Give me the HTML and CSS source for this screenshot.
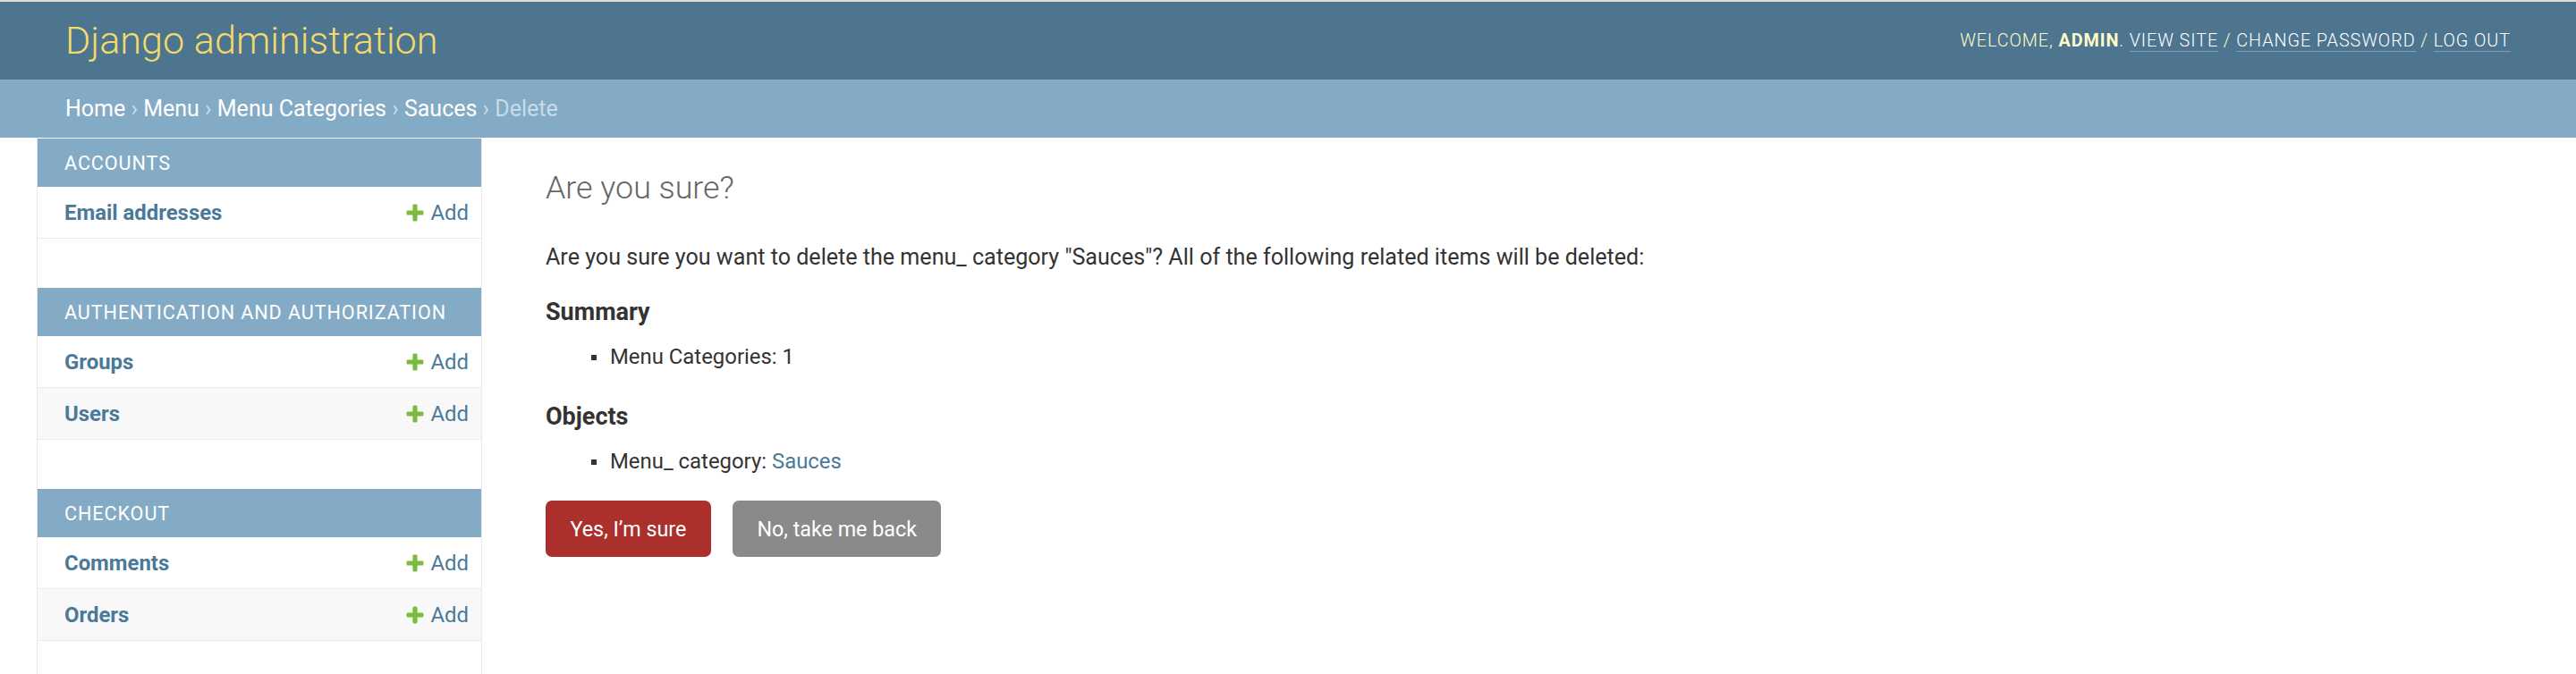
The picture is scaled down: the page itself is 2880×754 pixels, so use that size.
FILE: index.html
```html
<!DOCTYPE html>
<html lang="en">
<head>
<meta charset="utf-8">
<title>Are you sure? | Django site admin</title>
<link rel="stylesheet" href="styles.css">
</head>
<body>
<div class="container">
  <header class="header">
    <div class="branding">
      <h1 class="site-name"><a href="#">Django administration</a></h1>
    </div>
    <div class="user-tools">
      Welcome, <strong>admin</strong>.
      <a href="#">View site</a> /
      <a href="#">Change password</a> /
      <a href="#">Log out</a>
    </div>
  </header>

  <nav class="breadcrumbs">
    <a href="#">Home</a> <span class="sep">›</span>
    <a href="#">Menu</a> <span class="sep">›</span>
    <a href="#">Menu Categories</a> <span class="sep">›</span>
    <a href="#">Sauces</a> <span class="sep">›</span>
    <span class="current">Delete</span>
  </nav>

  <div class="main">
    <button class="toggle-nav" aria-label="Toggle navigation"></button>

    <nav class="sidebar">
      <div class="module">
        <div class="caption">Accounts</div>
        <div class="model-row">
          <a class="model-name" href="#">Email addresses</a>
          <a class="addlink" href="#"><svg class="plus" viewBox="0 0 1792 1792"><path d="M1600 796v192q0 40-28 68t-68 28h-416v416q0 40-28 68t-68 28h-192q-40 0-68-28t-28-68v-416h-416q-40 0-68-28t-28-68v-192q0-40 28-68t68-28h416v-416q0-40 28-68t68-28h192q40 0 68 28t28 68v416h416q40 0 68 28t28 68z"/></svg>Add</a>
        </div>
      </div>

      <div class="module">
        <div class="caption">Authentication and Authorization</div>
        <div class="model-row">
          <a class="model-name" href="#">Groups</a>
          <a class="addlink" href="#"><svg class="plus" viewBox="0 0 1792 1792"><path d="M1600 796v192q0 40-28 68t-68 28h-416v416q0 40-28 68t-68 28h-192q-40 0-68-28t-28-68v-416h-416q-40 0-68-28t-28-68v-192q0-40 28-68t68-28h416v-416q0-40 28-68t68-28h192q40 0 68 28t28 68v416h416q40 0 68 28t28 68z"/></svg>Add</a>
        </div>
        <div class="model-row model-row--alt">
          <a class="model-name" href="#">Users</a>
          <a class="addlink" href="#"><svg class="plus" viewBox="0 0 1792 1792"><path d="M1600 796v192q0 40-28 68t-68 28h-416v416q0 40-28 68t-68 28h-192q-40 0-68-28t-28-68v-416h-416q-40 0-68-28t-28-68v-192q0-40 28-68t68-28h416v-416q0-40 28-68t68-28h192q40 0 68 28t28 68v416h416q40 0 68 28t28 68z"/></svg>Add</a>
        </div>
      </div>

      <div class="module">
        <div class="caption">Checkout</div>
        <div class="model-row">
          <a class="model-name" href="#">Comments</a>
          <a class="addlink" href="#"><svg class="plus" viewBox="0 0 1792 1792"><path d="M1600 796v192q0 40-28 68t-68 28h-416v416q0 40-28 68t-68 28h-192q-40 0-68-28t-28-68v-416h-416q-40 0-68-28t-28-68v-192q0-40 28-68t68-28h416v-416q0-40 28-68t68-28h192q40 0 68 28t28 68v416h416q40 0 68 28t28 68z"/></svg>Add</a>
        </div>
        <div class="model-row model-row--alt">
          <a class="model-name" href="#">Orders</a>
          <a class="addlink" href="#"><svg class="plus" viewBox="0 0 1792 1792"><path d="M1600 796v192q0 40-28 68t-68 28h-416v416q0 40-28 68t-68 28h-192q-40 0-68-28t-28-68v-416h-416q-40 0-68-28t-28-68v-192q0-40 28-68t68-28h416v-416q0-40 28-68t68-28h192q40 0 68 28t28 68v416h416q40 0 68 28t28 68z"/></svg>Add</a>
        </div>
      </div>
    </nav>

    <div class="content">
      <h1 class="page-title">Are you sure?</h1>
      <p class="lead">Are you sure you want to delete the menu_ category "Sauces"? All of the following related items will be deleted:</p>
      <h2 class="section-title">Summary</h2>
      <ul class="items">
        <li>Menu Categories: 1</li>
      </ul>
      <h2 class="section-title">Objects</h2>
      <ul class="items items--last">
        <li>Menu_ category: <a href="#">Sauces</a></li>
      </ul>
      <form class="actions">
        <button type="submit" class="btn btn-delete">Yes, I’m sure</button>
        <a href="#" class="btn btn-cancel">No, take me back</a>
      </form>
    </div>
  </div>
</div>
</body>
</html>
```

FILE: styles.css
```css
* { box-sizing: border-box; }

html, body {
  margin: 0;
  padding: 0;
}

body {
  font-family: Roboto, "Liberation Sans", Arial, sans-serif;
  color: #333;
  background: #fff;
  border-top: 2px solid #dcdcdc;
}

a { text-decoration: none; }

.container {
  display: flex;
  flex-direction: column;
  height: calc(100vh - 2px);
}

/* Header */
.header {
  flex: 0 0 87px;
  display: flex;
  align-items: center;
  justify-content: space-between;
  padding: 0 73px;
  background: #4d758f;
}

.site-name {
  margin: 0;
  font-size: 43.2px;
  font-weight: 300;
  line-height: 52px;
}

.site-name a { color: #f3da6a; }

.user-tools {
  font-size: 19.8px;
  font-weight: 300;
  letter-spacing: 0.92px;
  text-transform: uppercase;
  color: #fffbc8;
  line-height: 26px;
}

.user-tools strong { font-weight: 700; }

.user-tools a {
  color: #fff;
  border-bottom: 1px solid rgba(255, 255, 255, 0.3);
}

/* Breadcrumbs */
.breadcrumbs {
  flex: 0 0 65px;
  padding: 0 73px;
  background: #84abc5;
  color: #c8dbe6;
  font-size: 25px;
  line-height: 65px;
}

.breadcrumbs a { color: #fff; }
.breadcrumbs .sep { color: #c8dbe6; }

/* Main */
.main {
  flex: 1;
  display: flex;
  min-height: 0;
}

.toggle-nav {
  flex: 0 0 42px;
  border: 0;
  border-right: 1px solid #eaeaea;
  background: #fff;
  padding: 0;
}

.sidebar {
  flex: 0 0 497px;
  border-right: 1px solid #eaeaea;
  border-top: 1px solid transparent;
}

.module { margin-bottom: 55px; }

.caption {
  height: 54px;
  display: flex;
  align-items: center;
  padding-left: 30px;
  background: #84abc5;
  color: #fff;
  font-size: 21.6px;
  letter-spacing: 0.92px;
  text-transform: uppercase;
  white-space: nowrap;
}

.model-row {
  height: 58px;
  display: flex;
  align-items: center;
  justify-content: space-between;
  padding: 0 14px 0 30px;
  border-bottom: 1px solid #eaeaea;
  font-size: 23.9px;
}

.model-row--alt { background: #f8f8f8; }

.model-name {
  color: #4a7999;
  font-weight: 700;
}

.addlink {
  display: flex;
  align-items: center;
  color: #4a7999;
}

.plus {
  width: 24px;
  height: 24px;
  margin-right: 5px;
  fill: #7abb3e;
}

/* Content */
.content {
  flex: 1;
  padding: 34px 71px;
}

.page-title {
  margin: 0 0 41px;
  font-size: 35.8px;
  line-height: 44px;
  font-weight: 300;
  color: #666;
}

.lead {
  margin: 0 0 29px;
  font-size: 25.1px;
  line-height: 30px;
}

.section-title {
  margin: 0 0 18px;
  font-size: 27px;
  line-height: 34px;
  font-weight: 700;
  color: #333;
}

.items {
  list-style: none;
  margin: 0 0 35px;
  padding: 0 0 0 51px;
  font-size: 23.9px;
  line-height: 30px;
}

.items--last { margin-bottom: 29px; }

.items li::before {
  content: "";
  display: inline-block;
  width: 6px;
  height: 6px;
  background: #333;
  margin-right: 15px;
  vertical-align: 4px;
}

.items a { color: #4a7999; }

.actions {
  display: flex;
  gap: 24px;
  margin: 0;
}

.btn {
  height: 63px;
  display: inline-flex;
  align-items: center;
  padding: 0 27.5px;
  border: 0;
  border-radius: 7px;
  color: #fff;
  font-family: inherit;
  font-size: 23.3px;
  cursor: pointer;
}

.btn-delete { background: #ab302c; }
.btn-cancel { background: #8a8a8a; }
```
